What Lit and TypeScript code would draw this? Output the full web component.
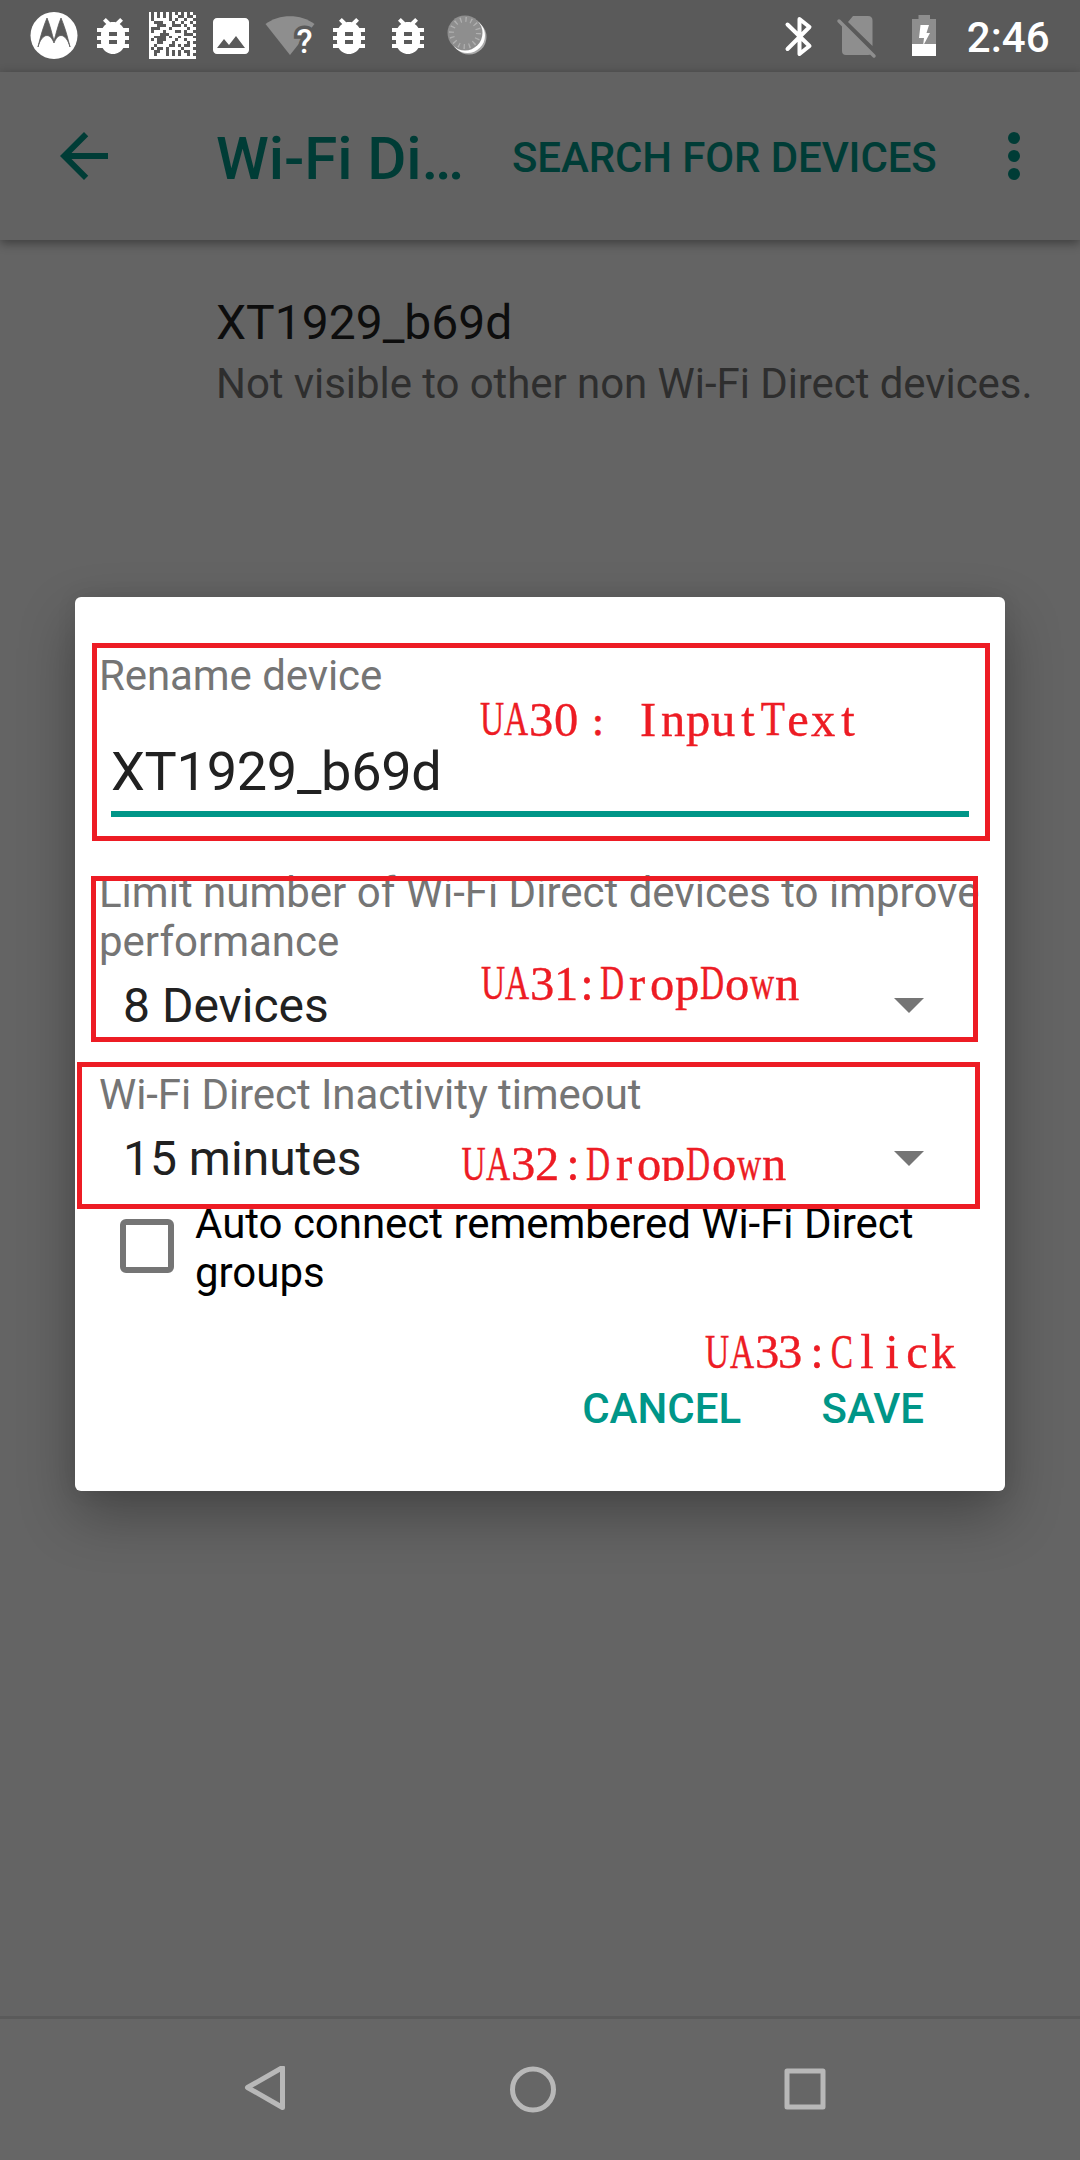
import { LitElement, html, svg, css } from "lit";
import { customElement } from "lit/decorators.js";

const bug = html`<svg class="ic" viewBox="0 0 24 24" fill="#fff"><path d="M20 8h-2.81c-.45-.78-1.07-1.45-1.82-1.96L17 4.41 15.59 3l-2.17 2.17C12.96 5.06 12.49 5 12 5s-.96.06-1.41.17L8.41 3 7 4.41l1.62 1.63C7.88 6.55 7.26 7.22 6.81 8H4v2h2.09c-.05.33-.09.66-.09 1v1H4v2h2v1c0 .34.04.67.09 1H4v2h2.81c1.04 1.79 2.97 3 5.19 3s4.15-1.21 5.19-3H20v-2h-2.09c.05-.33.09-.66.09-1v-1h2v-2h-2v-1c0-.34-.04-.67-.09-1H20V8zm-6 8h-4v-2h4v2zm0-4h-4v-2h4v2z"/></svg>`;

const matrixRows = [
  "1010101010101010",
  "1010101011001001",
  "1011111010110110",
  "1100011101101101",
  "1110001100010110",
  "1000111011111011",
  "1011101110010110",
  "1111000111110001",
  "1100001011011110",
  "1010001110110111",
  "1110011101111010",
  "1101111001010011",
  "1010010111101110",
  "1100110101010011",
  "1101110101011010",
  "1111111111111111",
];

interface Note { text: string; baseline: number; centers: number[]; clip?: boolean }

const notes: Note[] = [
  { text: "UA30：InputText", baseline: 735.5, centers: [492, 516, 541, 566, 605, 648, 673, 698, 723, 748, 773, 798, 823, 848] },
  { text: "UA31:DropDown", baseline: 999.5, centers: [493, 517, 542, 566, 587, 612, 637, 662, 687, 712, 737, 762, 787] },
  { text: "UA32:DropDown", baseline: 1180, centers: [473.5, 498, 523, 547, 573, 598, 624, 649, 673, 698, 724, 749, 774], clip: true },
  { text: "UA33:Click", baseline: 1368, centers: [717, 742, 767, 790, 817, 842, 867, 892, 917, 943] },
];

// Horizontal squeeze that fits a wide glyph into its 25px cell.
const squeeze = (c: string) =>
  /[UADCw]/.test(c) ? 0.69 : c === "T" ? 0.82 : c === "：" ? 0.99 : 1;

interface Run { text: string; scale: number; centers: number[] }

function runsOf(note: Note): Run[] {
  const runs: Run[] = [];
  [...note.text].forEach((c, i) => {
    const scale = squeeze(c);
    const last = runs[runs.length - 1];
    if (last && last.scale === scale) {
      last.text += c;
      last.centers.push(note.centers[i]);
    } else {
      runs.push({ text: c, scale, centers: [note.centers[i]] });
    }
  });
  return runs;
}

@customElement("status-bar")
class StatusBar extends LitElement {
  static styles = css`
    :host { display: flex; height: 72px; box-sizing: border-box; padding: 0 30.5px 0 29.5px; background: #5a5a5a; justify-content: space-between; }
    .left { display: flex; gap: 11px; padding-top: 12px; }
    .right { display: flex; padding-top: 12px; }
    .ic { width: 48px; height: 48px; display: block; overflow: visible; }
    .sim { margin-left: 10px; }
    .bat { margin-left: 20px; }
    .time { margin-left: 18.5px; font: 500 42px/51px Roboto, sans-serif; color: #fff; }
    .q { font: 500 33px Roboto, sans-serif; text-anchor: middle; fill: #fff; stroke: #5a5a5a; stroke-width: 7px; paint-order: stroke; }
  `;
  render() {
    return html`
      <div class="left">
        <svg class="ic" viewBox="0 0 48 48"><circle cx="24" cy="23.5" r="23.5" fill="#fff"/><path fill="#5a5a5a" d="M17 6 C12 18 9.500 29 8 35 C9.500 29 13 23.500 17 23.500 C20 23.500 22.500 27 24 31 C25.500 27 28 23.500 31 23.500 C35 23.500 38.500 29 40 35 C38.500 29 36 18 31 6 C28 13 26 22 24 29 C22 22 20 13 17 6 Z" stroke="#5a5a5a" stroke-width=".8"/></svg>
        ${bug}
        <svg class="ic" viewBox="0 0 48 48" shape-rendering="crispEdges" fill="#fff">
          ${matrixRows.map((r, y) => [...r].map((c, x) => c === "1" ? svg`<rect x=${0.5 + x * 2.94} y=${y * 2.94} width="2.96" height="2.96"/>` : null))}
        </svg>
        <svg class="ic" viewBox="0 0 24 24" fill="#fff"><path d="M21 19V5c0-1.100-.9-2-2-2H5c-1.100 0-2 .9-2 2v14c0 1.100.9 2 2 2h14c1.100 0 2-.9 2-2zM8.500 13.500l2.500 3.010L14.500 12l4.500 6H5l3.500-4.500z"/></svg>
        <svg class="ic" viewBox="0 0 48 48"><path d="M-.5 12 C13 1.500 35 1.500 48.500 12 L24 43 Z" fill="#8e8e8e"/><text class="q" x="38.500" y="41">?</text></svg>
        ${bug}${bug}
        <svg class="ic" viewBox="0 0 48 48">
          <circle cx="26" cy="25" r="17.500" fill="#aaa"/><circle cx="24.500" cy="23.500" r="17.500" fill="#fff"/>
          <circle cx="22" cy="21" r="17.500" fill="#8e8e8e"/>
          <circle cx="22" cy="21" r="13.500" fill="none" stroke="#b0b0b0" stroke-width="5" stroke-dasharray="1.300 4.002"/>
        </svg>
      </div>
      <div class="right">
        <svg class="ic" viewBox="0 0 48 48" fill="none" stroke="#fff" stroke-width="4" stroke-linejoin="round" stroke-linecap="round"><path d="M13.500 12.500 L35.500 34 L25.500 42 V7 L35.500 15 L13.500 37"/></svg>
        <svg class="ic sim" viewBox="0 0 48 48" fill="#8e8e8e"><path d="M21 4 H36 Q40.500 4 40.500 8.500 V34 L16 10 Z M10 13 L39 42 Q38 43 36 43 H14 Q10 43 10 39 Z"/><path d="M7 9 L42 44" stroke="#8e8e8e" stroke-width="3.500" stroke-linecap="round"/></svg>
        <svg class="ic bat" viewBox="0 0 48 48"><path d="M18.500 3 H30 V7 H36 V44 H12 V7 H18.500 Z" fill="#8e8e8e"/><path d="M12 32 H36 V44 H12 Z M20.500 13 H29 L26.500 21 H30 L23 34 L24 26 H19 Z" fill="#fff"/></svg>
        <div class="time">2:46</div>
      </div>`;
  }
}

@customElement("settings-dialog")
class SettingsDialog extends LitElement {
  static styles = css`
    :host { display: block; box-sizing: border-box; width: 930px; height: 894px; padding: 54px 24px 0; background: #fff; border-radius: 6px;
      box-shadow: 0 24px 56px rgba(0, 0, 0, .3), 0 0 20px rgba(0, 0, 0, .08); font: 42px/49px Roboto, sans-serif; color: #757575; }
    .label { width: fit-content; letter-spacing: -.08px; }
    .input { margin: 39px 12px 0; height: 72px; width: 858px; font-size: 54px; line-height: 65px; letter-spacing: -.25px; color: #212121; border-bottom: 6px solid #009688; }
    .limit { margin-top: 51px; }
    .spin { display: flex; align-items: center; justify-content: space-between; height: 79px; padding: 0 57px 0 24px; font-size: 48px; color: #212121; }
    .caret { width: 30px; height: 15px; display: block; }
    .timeout { margin-top: 25px; }
    .check { display: flex; gap: 21px; margin: 1px 0 0 21px; color: #000; letter-spacing: -.03px; }
    .box { box-sizing: border-box; flex: none; width: 54px; height: 54px; margin-top: 20px; border: 6px solid #757575; border-radius: 6px; }
    .actions { display: flex; justify-content: flex-end; gap: 80.5px; margin: 87px 57px 0 0; font-weight: 500; color: #009688; }
  `;
  render() {
    const caret = html`<svg class="caret" viewBox="0 0 30 15"><path d="M0 0H30L15 15Z" fill="#757575"/></svg>`;
    return html`
      <div class="label">Rename device</div>
      <div class="input"><span>XT1929_b69d</span></div>
      <div class="limit">Limit number of Wi-Fi Direct devices to improve performance</div>
      <div class="spin"><span>8 Devices</span>${caret}</div>
      <div class="label timeout">Wi-Fi Direct Inactivity timeout</div>
      <div class="spin"><span>15 minutes</span>${caret}</div>
      <div class="check"><span class="box"></span><span>Auto connect remembered Wi-Fi Direct groups</span></div>
      <div class="actions"><span>CANCEL</span><span>SAVE</span></div>`;
  }
}

@customElement("app-root")
class AppRoot extends LitElement {
  static styles = css`
    :host { display: flex; flex-direction: column; position: relative; width: 1080px; height: 2160px; overflow: hidden; background: #646464; font-family: Roboto, sans-serif; }
    .bar { display: flex; align-items: center; box-sizing: border-box; height: 168px; padding: 0 30px 0 48px; background: #626262; color: #003c36; box-shadow: 0 3px 10px rgba(0, 0, 0, .4); }
    .arrow { width: 72px; height: 72px; }
    .title { margin-left: 96px; padding-top: 5px; width: 296px; font-size: 60px; font-weight: 500; letter-spacing: -.1px; white-space: nowrap; }
    .search { padding-top: 3px; width: 424px; font-size: 42px; font-weight: 500; letter-spacing: -.12px; white-space: nowrap; }
    .more { width: 72px; height: 72px; margin-left: 42px; }
    .body { flex: 1; padding: 55px 0 0 216px; }
    .name { font-size: 48px; line-height: 56px; color: #0d0d0d; }
    .sub { margin-top: 8px; font-size: 42px; line-height: 49px; letter-spacing: -.065px; color: #2e2e2e; white-space: nowrap; }
    .nav { box-sizing: border-box; height: 144px; border-top: 3px solid #5a5a5a; background: #666; display: flex; align-items: center; padding: 0 0 0 241px; }
    .nav svg { width: 48px; height: 48px; display: block; }
    .nav .home { margin-left: 220px; }
    .nav .recent { margin-left: 224px; }
    settings-dialog { position: absolute; left: 75px; top: 597px; }
    .notes { position: absolute; left: 0; top: 0; width: 1080px; height: 2160px; }
    .note { font-family: "Liberation Serif", serif; font-size: 48.5px; fill: #ed1c24; stroke: #ed1c24; stroke-width: .4px; text-anchor: middle; }
    .note.wide { font-family: "Noto Sans CJK SC", sans-serif; font-size: 28px; font-weight: 700; }
  `;
  render() {
    return html`
      <status-bar></status-bar>
      <div class="bar">
        <svg class="arrow" viewBox="0 0 24 24" fill="#003c36"><path d="M20 11H7.830l5.590-5.590L12 4l-8 8 8 8 1.410-1.410L7.830 13H20v-2z"/></svg>
        <div class="title">Wi-Fi Di…</div>
        <div class="search">SEARCH FOR DEVICES</div>
        <svg class="more" viewBox="0 0 24 24" fill="#003c36"><circle cx="12" cy="6" r="2"/><circle cx="12" cy="12" r="2"/><circle cx="12" cy="18" r="2"/></svg>
      </div>
      <div class="body">
        <div class="name">XT1929_b69d</div>
        <div class="sub">Not visible to other non Wi-Fi Direct devices.</div>
      </div>
      <div class="nav">
        <svg viewBox="0 0 48 48" fill="none" stroke="#b8b8b8" stroke-width="5" stroke-linejoin="round"><path d="M6.500 21.500 L41.500 1.500 V41.500 Z"/></svg>
        <svg class="home" viewBox="0 0 48 48" fill="none" stroke="#b8b8b8" stroke-width="5"><circle cx="24" cy="23.500" r="20.500"/></svg>
        <svg class="recent" viewBox="0 0 48 48" fill="none" stroke="#b8b8b8" stroke-width="5" stroke-linejoin="round"><rect x="6" y="5" width="36" height="36"/></svg>
      </div>
      <settings-dialog></settings-dialog>
      <svg class="notes" viewBox="0 0 1080 2160">
        <defs><clipPath id="cut"><rect x="0" y="1100" width="1080" height="81"/></clipPath></defs>
        <g fill="none" stroke="#ed1c24" stroke-width="5">
          <rect x="94.500" y="645.500" width="893" height="193"/>
          <rect x="93.500" y="878.500" width="882" height="161"/>
          <rect x="79.500" y="1064.500" width="898" height="142"/>
        </g>
        ${notes.map(n => svg`<g clip-path=${n.clip ? "url(#cut)" : "none"}>${runsOf(n).map(r => svg`<text class=${r.text === "：" ? "note wide" : "note"} transform=${`scale(${r.scale} 1)`} x=${r.centers.map(c => (c / r.scale).toFixed(2)).join(" ")} y=${n.baseline}>${r.text}</text>`)}</g>`)}
      </svg>`;
  }
}
